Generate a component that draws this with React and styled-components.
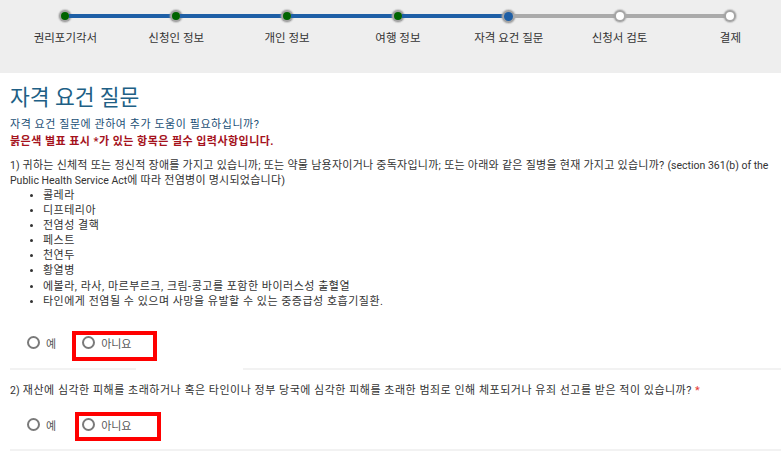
import React from "react";
import styled, { createGlobalStyle } from "styled-components";

const Global = createGlobalStyle`
  html, body { margin: 0; padding: 0; background: #ffffff; }
  body {
    overflow: hidden;
    font-family: Roboto, "Noto Sans CJK KR", "Noto Sans", sans-serif;
    color: #333;
  }
`;

const Page = styled.div`
  width: 781px;
  overflow: hidden;
`;

const Header = styled.div`
  height: 73px;
  background: #eeeeee;
  display: flex;
  padding-left: 10px;
  box-sizing: border-box;
`;

const Step = styled.div`
  flex: 0 0 110.83px;
  display: flex;
  flex-direction: column;
  align-items: center;
`;

const Track = styled.div`
  margin-top: 10px;
  height: 12px;
  width: 100%;
  display: flex;
  align-items: center;
`;

const Seg = styled.div`
  flex: 1;
  height: 4px;
  background: ${(p) => (p.$hidden ? "transparent" : p.$done ? "#1e5fa6" : "#aaaaaa")};
`;

const Dot = styled.div`
  flex: 0 0 auto;
  width: ${(p) => (p.$state === "current" ? 9 : 8)}px;
  height: ${(p) => (p.$state === "current" ? 9 : 8)}px;
  border-radius: 50%;
  background: ${(p) =>
    p.$state === "done" ? "#006400" : p.$state === "current" ? "#1e5fa6" : "#ffffff"};
  box-shadow: 0 0 0 2px #a4a4a4, 0 0 1px 3px rgba(160, 160, 160, 0.45);
`;

const StepLabel = styled.div`
  margin-top: 8px;
  font-size: 11.5px;
  line-height: 16px;
  color: #333;
  white-space: nowrap;
`;

const Content = styled.div`
  padding-left: 10px;
`;

const Title = styled.h1`
  margin: 11px 0 4px;
  font-size: 21.5px;
  line-height: 28px;
  font-weight: 400;
  color: #205f85;
`;

const Help = styled.div`
  font-size: 11px;
  line-height: 17px;
  letter-spacing: 0.55px;
  color: #1b4f76;
`;

const Required = styled.div`
  font-size: 11px;
  line-height: 17px;
  letter-spacing: 0.45px;
  font-weight: 700;
  color: #a5121c;
`;

const Question = styled.div`
  margin-top: ${(p) => p.$top || 0}px;
  font-size: 11px;
  line-height: 15px;
  letter-spacing: ${(p) => p.$ls ?? 0.5}px;
  color: #333;
  white-space: nowrap;
`;

const Latin = styled.span`
  font-size: 10.5px;
  letter-spacing: 0;
`;

const Star = styled.span`
  color: #e53935;
  margin-left: 3px;
`;

const List = styled.ul`
  margin: 0;
  padding-left: 33px;
  font-size: 11px;
  line-height: 15.1px;
  letter-spacing: 0.5px;
  color: #333;
  li::marker { font-size: 10px; }
`;

const RadioRow = styled.div`
  margin-top: ${(p) => p.$top}px;
  height: 20px;
  display: flex;
  align-items: center;
  padding-left: 17px;
`;

const Option = styled.label`
  position: relative;
  display: flex;
  align-items: center;
  gap: 6px;
  margin-left: ${(p) => p.$gap || 0}px;
  font-size: 11px;
  color: #555;
`;

const Circle = styled.span`
  width: 13px;
  height: 13px;
  box-sizing: border-box;
  border-radius: 50%;
  border: 2px solid #7a7a7a;
  background: #fff;
`;

const Mark = styled.span`
  position: absolute;
  left: ${(p) => p.$left}px;
  top: ${(p) => p.$top}px;
  width: ${(p) => p.$w}px;
  height: ${(p) => p.$h}px;
  box-sizing: border-box;
  border: 4px solid #ff0000;
  pointer-events: none;
`;

const Divider = styled.div`
  margin-top: ${(p) => p.$top}px;
  height: 2px;
  background: ${(p) =>
    p.$gap
      ? "linear-gradient(to right, #f2f2f2 0 126px, transparent 126px 233px, #f2f2f2 233px)"
      : "#f2f2f2"};
`;

const steps = ["권리포기각서", "신청인 정보", "개인 정보", "여행 정보", "자격 요건 질문", "신청서 검토", "결제"];
const current = 4;

const diseases = [
  "콜레라",
  "디프테리아",
  "전염성 결핵",
  "페스트",
  "천연두",
  "황열병",
  "에볼라, 라사, 마르부르크, 크림-콩고를 포함한 바이러스성 출혈열",
  "타인에게 전염될 수 있으며 사망을 유발할 수 있는 중증급성 호흡기질환.",
];

function Radios({ top, mark }) {
  return (
    <RadioRow $top={top}>
      <Option>
        <Circle />
        예
      </Option>
      <Option $gap={26}>
        <Circle />
        아니요
        <Mark $left={mark.left} $top={mark.top} $w={mark.w} $h={mark.h} />
      </Option>
    </RadioRow>
  );
}

export default function App() {
  return (
    <Page>
      <Global />
      <Header>
        {steps.map((s, i) => {
          const state = i < current ? "done" : i === current ? "current" : "todo";
          return (
            <Step key={s}>
              <Track>
                <Seg $hidden={i === 0} $done={i <= current} />
                <Dot $state={state} />
                <Seg $hidden={i === steps.length - 1} $done={i < current} />
              </Track>
              <StepLabel>{s}</StepLabel>
            </Step>
          );
        })}
      </Header>
      <Content>
        <Title>자격 요건 질문</Title>
        <Help>자격 요건 질문에 관하여 추가 도움이 필요하십니까?</Help>
        <Required>붉은색 별표 표시 *가 있는 항목은 필수 입력사항입니다.</Required>
        <Question $top={8} $ls={0.25}>
          <Latin>1)</Latin> 귀하는 신체적 또는 정신적 장애를 가지고 있습니까; 또는 약물 남용자이거나 중독자입니까; 또는 아래와 같은 질병을 현재 가지고 있습니까?{" "}
          <Latin>(section 361(b) of the</Latin>
          <br />
          <Latin>Public Health Service Act</Latin>에 따라 전염병이 명시되었습니다)
        </Question>
        <List>
          {diseases.map((d) => (
            <li key={d}>{d}</li>
          ))}
        </List>
        <Radios top={24} mark={{ left: -10, top: -4, w: 85, h: 30 }} />
        <Divider $top={15} $gap />
        <Question $top={13}>
          <Latin>2)</Latin> 재산에 심각한 피해를 초래하거나 혹은 타인이나 정부 당국에 심각한 피해를 초래한 범죄로 인해 체포되거나 유죄 선고를 받은 적이 있습니까?
          <Star>*</Star>
        </Question>
        <Radios top={17} mark={{ left: -7, top: -5, w: 86, h: 29 }} />
        <Divider $top={14} />
      </Content>
    </Page>
  );
}
